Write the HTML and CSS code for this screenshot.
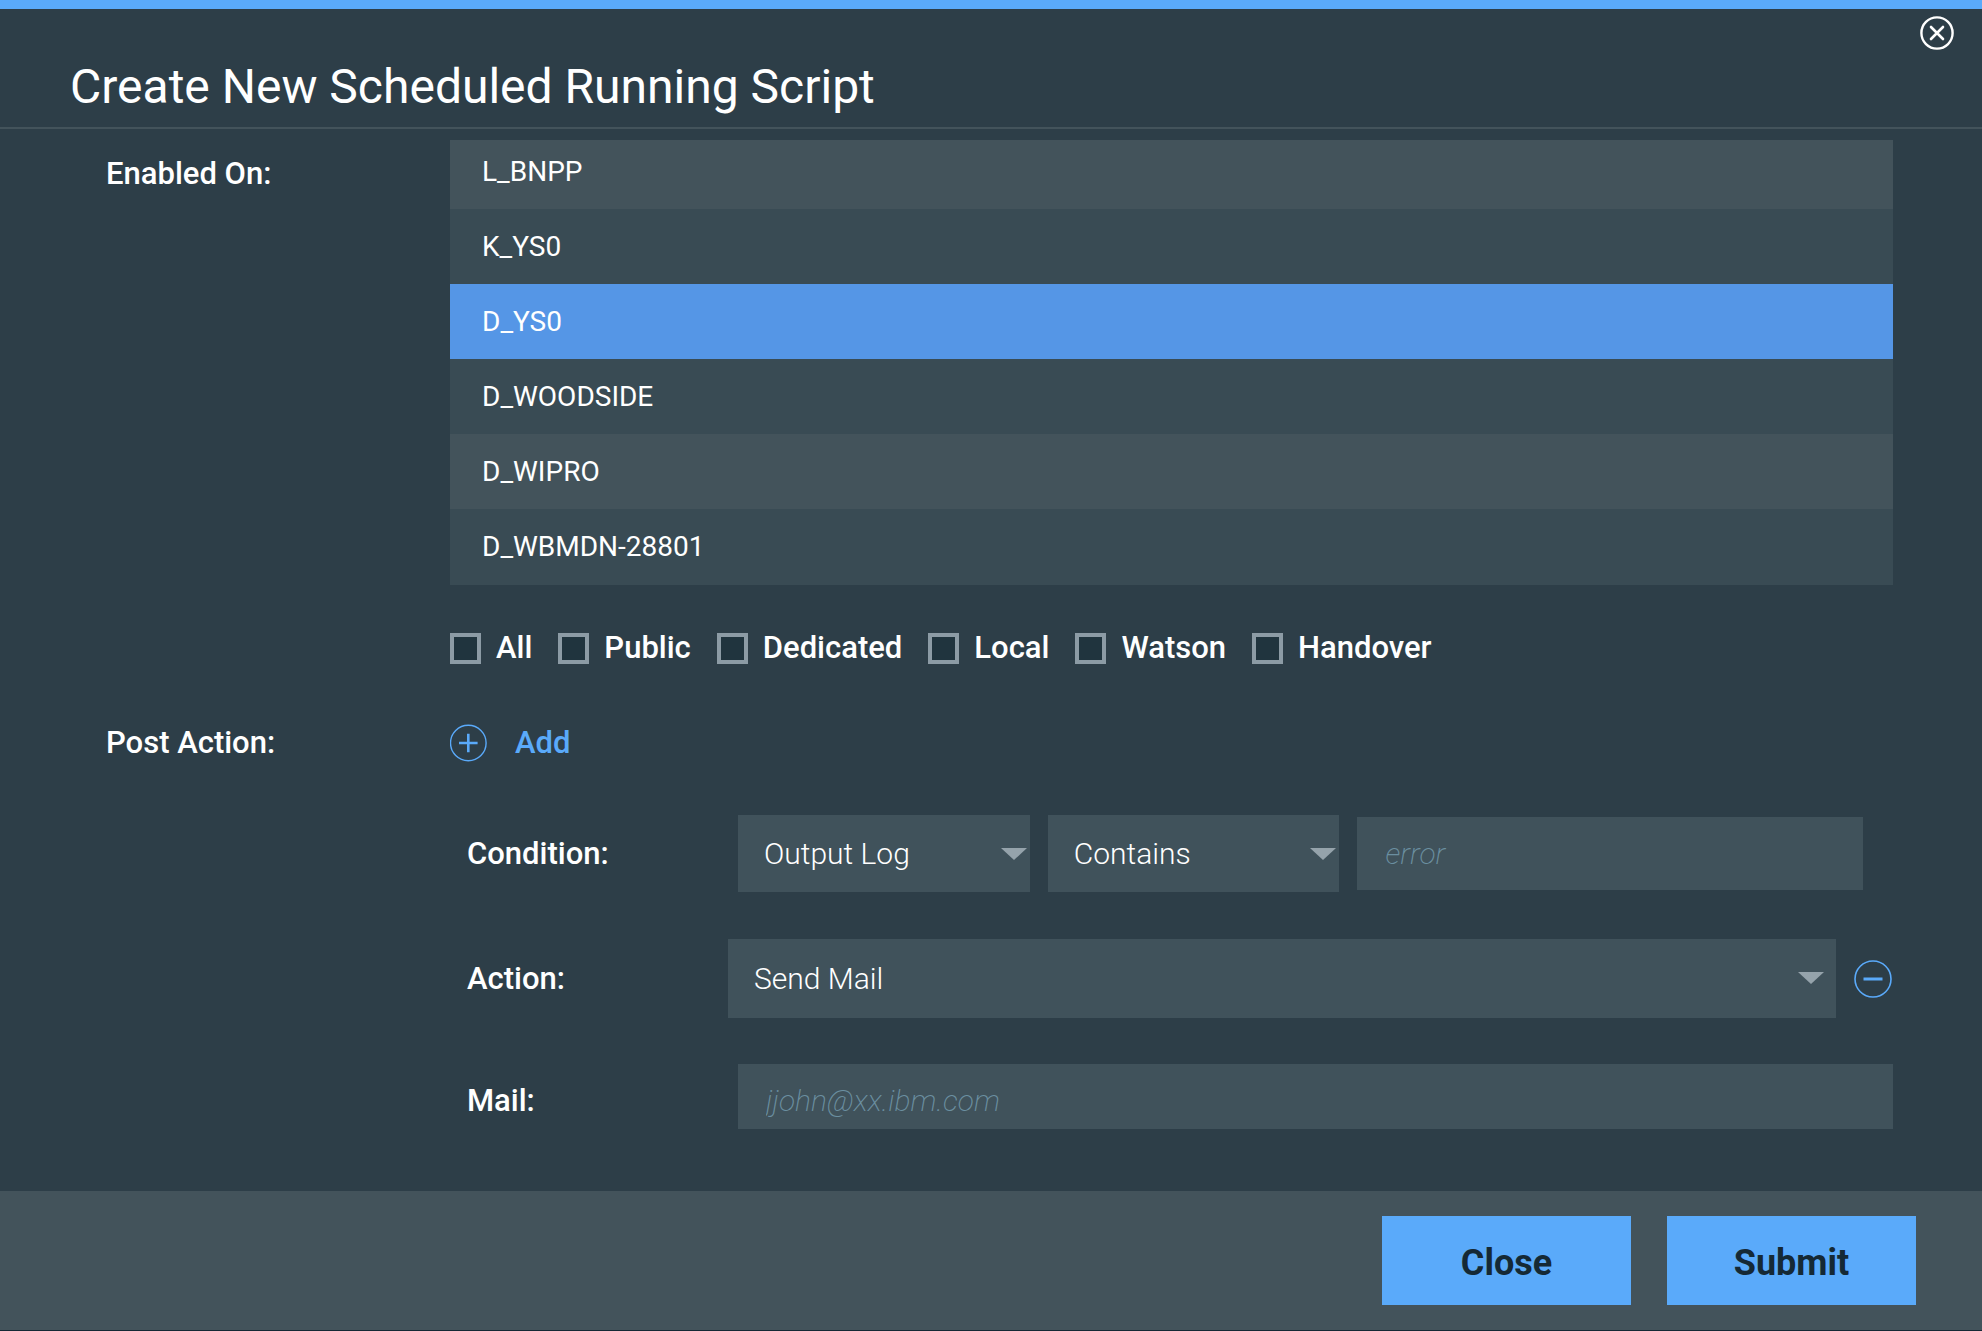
FILE: index.html
```html
<!DOCTYPE html>
<html lang="en">
<head>
<meta charset="utf-8">
<title>Create New Scheduled Running Script</title>
<link rel="stylesheet" href="styles.css">
</head>
<body>
<form class="dialog">
  <header class="dialog-header">
    <h1 class="dialog-title">Create New Scheduled Running Script</h1>
    <button class="icon-button dismiss" type="button" aria-label="Dismiss">
      <svg width="34" height="34" viewBox="0 0 34 34" fill="none" stroke="#fff" stroke-width="2.4"><circle cx="17" cy="17" r="15.6"/><path d="M11 11l12 12M23 11L11 23" stroke-width="2.6" stroke-linecap="round"/></svg>
    </button>
  </header>

  <main class="dialog-body">
    <label class="section-label" for="enabled-on">Enabled On:</label>
    <div class="section">
      <select class="env-list" id="enabled-on" size="6">
        <option>L_BNPP</option>
        <option>K_YS0</option>
        <option selected>D_YS0</option>
        <option>D_WOODSIDE</option>
        <option>D_WIPRO</option>
        <option>D_WBMDN-28801</option>
      </select>
      <div class="checks">
        <label class="check"><input type="checkbox">All</label>
        <label class="check"><input type="checkbox">Public</label>
        <label class="check"><input type="checkbox">Dedicated</label>
        <label class="check"><input type="checkbox">Local</label>
        <label class="check"><input type="checkbox">Watson</label>
        <label class="check"><input type="checkbox">Handover</label>
      </div>
    </div>

    <div class="section-label post-label">Post Action:</div>
    <div class="section post-action">
      <button class="add" type="button">
        <svg width="37" height="38" viewBox="0 0 37 38" fill="none" stroke="#5aaafa"><circle cx="18.3" cy="19" r="17.8" stroke-width="1.4"/><path d="M9 19h18.600M18.300 9.700v18.600" stroke-width="2.6"/></svg>
        Add
      </button>

      <div class="row condition">
        <label class="row-label" for="source">Condition:</label>
        <div class="select"><select id="source"><option>Output Log</option></select></div>
        <div class="select"><select aria-label="Operator"><option>Contains</option></select></div>
        <input class="field value" type="text" placeholder="error" aria-label="Value">
      </div>

      <div class="row action">
        <label class="row-label" for="action">Action:</label>
        <div class="select"><select id="action"><option>Send Mail</option></select></div>
        <button class="icon-button" type="button" aria-label="Remove">
          <svg width="38" height="38" viewBox="0 0 38 38" fill="none" stroke="#5aaafa"><circle cx="19" cy="19" r="18" stroke-width="1.6"/><path d="M9.500 19h19" stroke-width="3"/></svg>
        </button>
      </div>

      <div class="row mail">
        <label class="row-label" for="mail">Mail:</label>
        <input class="field" id="mail" type="text" placeholder="jjohn@xx.ibm.com">
      </div>
    </div>
  </main>

  <footer class="dialog-footer">
    <button class="button" type="button">Close</button>
    <button class="button" type="submit">Submit</button>
  </footer>
</form>
</body>
</html>
```
FILE: styles.css
```css
* {
  box-sizing: border-box;
}

body {
  margin: 0;
  background: #2d3e48;
  color: #fff;
  font: 500 31px/40px Roboto, "Liberation Sans", sans-serif;
}

button,
input,
select {
  margin: 0;
  border: 0;
  border-radius: 0;
  font: inherit;
  color: inherit;
}

button {
  padding: 0;
  background: none;
  cursor: pointer;
}

svg {
  display: block;
  flex: none;
}

.dialog {
  display: flex;
  flex-direction: column;
  min-height: 100vh;
  border-top: 9px solid #5aaafa;
  border-bottom: 1px solid #152935;
}

.dialog-header {
  display: flex;
  align-items: flex-start;
  justify-content: space-between;
  padding: 7px 28px 10px 70px;
  border-bottom: 2px solid #43535b;
}

.dialog-title {
  margin: 0;
  padding-top: 41px;
  font-size: 48px;
  line-height: 60px;
  font-weight: 400;
}

.dialog-body {
  display: grid;
  grid-template-columns: 344px minmax(0, 1fr);
  row-gap: 55px;
  flex: 1;
  align-content: start;
  padding: 11px 89px 62px 106px;
}

.section-label {
  padding-top: 14px;
}

.post-label {
  padding-top: 0;
}

.env-list {
  display: block;
  width: 100%;
  height: 445px;
  padding: 0;
  overflow: hidden;
  outline: 0;
  background: #394b54;
  font-size: 28px;
  line-height: 32px;
  font-weight: 400;
}

.env-list option {
  min-height: 0;
  padding: 21px 32px;
  color: #fff;
}

.env-list option:nth-child(odd) {
  background: #43535b;
}

.env-list option:first-child {
  padding-top: 15px;
}

.env-list option:checked {
  background: #5596e6 linear-gradient(#5596e6, #5596e6);
  -webkit-text-fill-color: #fff;
}

.checks {
  display: flex;
  flex-wrap: wrap;
  gap: 26px;
  margin-top: 43px;
}

.check {
  display: flex;
  align-items: center;
  gap: 15px;
}

.check input {
  appearance: none;
  width: 31px;
  height: 31px;
  border: 4px solid #8c9ba5;
  background: #20343e;
}

.check input:checked {
  background: #5aaafa;
}

.add {
  display: flex;
  align-items: center;
  gap: 28px;
  margin-bottom: 52px;
  color: #5aaafa;
}

.row {
  display: flex;
  align-items: center;
  gap: 18px;
  padding-left: 17px;
}

.row-label {
  flex: none;
  width: 253px;
}

.condition {
  display: grid;
  grid-template-columns: 253px 292fr 292fr 506fr;
  padding-right: 30px;
}

.condition .field {
  height: 73px;
}

.select {
  position: relative;
  flex: 1;
  min-width: 0;
  background: #40525b;
}

.select select {
  display: block;
  appearance: none;
  width: 100%;
  height: 77px;
  padding: 0 40px 0 26px;
  background: none;
  font-size: 30px;
  font-weight: 300;
}

.select::after {
  content: "";
  position: absolute;
  top: 33px;
  right: 3px;
  border: solid transparent;
  border-width: 12px 13px 0;
  border-top-color: #95a3ab;
  pointer-events: none;
}

.action {
  margin: 47px 0 46px;
  padding-right: 1px;
}

.action .row-label {
  width: 243px;
}

.action select {
  height: 79px;
}

.action .select::after {
  right: 12px;
}

.field {
  flex: 1;
  min-width: 0;
  height: 65px;
  padding: 0 28px;
  background: #40525b;
  font-size: 30px;
  font-weight: 300;
}

.field::placeholder {
  color: #6b8fa0;
  font-style: italic;
  font-weight: 200;
  opacity: 1;
}

.mail {
  align-items: baseline;
}

.mail .field {
  padding-top: 8px;
}

.dialog-footer {
  display: flex;
  justify-content: flex-end;
  gap: 36px;
  padding: 25px 66px;
  background: #43535b;
}

.button {
  width: 249px;
  height: 89px;
  padding-top: 4px;
  background: #5aaafa;
  color: #152935;
  font-size: 36px;
  font-weight: 700;
}
```
